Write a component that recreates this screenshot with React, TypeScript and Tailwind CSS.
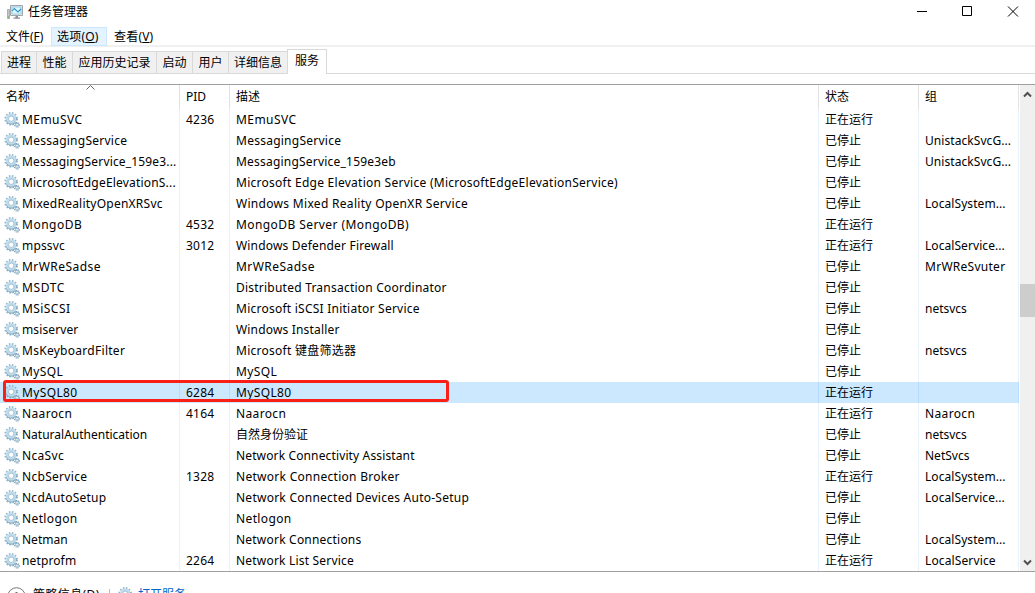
import React from 'react';

type Service = [name: string, pid: string, description: string, running: boolean, group: string];

const services: Service[] = [
  ['MEmuSVC', '4236', 'MEmuSVC', true, ''],
  ['MessagingService', '', 'MessagingService', false, 'UnistackSvcG...'],
  ['MessagingService_159e3...', '', 'MessagingService_159e3eb', false, 'UnistackSvcG...'],
  ['MicrosoftEdgeElevationS...', '', 'Microsoft Edge Elevation Service (MicrosoftEdgeElevationService)', false, ''],
  ['MixedRealityOpenXRSvc', '', 'Windows Mixed Reality OpenXR Service', false, 'LocalSystem...'],
  ['MongoDB', '4532', 'MongoDB Server (MongoDB)', true, ''],
  ['mpssvc', '3012', 'Windows Defender Firewall', true, 'LocalService...'],
  ['MrWReSadse', '', 'MrWReSadse', false, 'MrWReSvuter'],
  ['MSDTC', '', 'Distributed Transaction Coordinator', false, ''],
  ['MSiSCSI', '', 'Microsoft iSCSI Initiator Service', false, 'netsvcs'],
  ['msiserver', '', 'Windows Installer', false, ''],
  ['MsKeyboardFilter', '', 'Microsoft 键盘筛选器', false, 'netsvcs'],
  ['MySQL', '', 'MySQL', false, ''],
  ['MySQL80', '6284', 'MySQL80', true, ''],
  ['Naarocn', '4164', 'Naarocn', true, 'Naarocn'],
  ['NaturalAuthentication', '', '自然身份验证', false, 'netsvcs'],
  ['NcaSvc', '', 'Network Connectivity Assistant', false, 'NetSvcs'],
  ['NcbService', '1328', 'Network Connection Broker', true, 'LocalSystem...'],
  ['NcdAutoSetup', '', 'Network Connected Devices Auto-Setup', false, 'LocalService...'],
  ['Netlogon', '', 'Netlogon', false, ''],
  ['Netman', '', 'Network Connections', false, 'LocalSystem...'],
  ['netprofm', '2264', 'Network List Service', true, 'LocalService'],
];

// Extra advance, in pixels, spread over the characters of a label.
const extraWidth: Record<string, number> = {
  MEmuSVC: 3,
  MessagingService: 4,
  'MessagingService_159e3...': 4,
  MessagingService_159e3eb: 5,
  'MicrosoftEdgeElevationS...': 5,
  'Microsoft Edge Elevation Service (MicrosoftEdgeElevationService)': 17,
  MixedRealityOpenXRSvc: 5,
  'Windows Mixed Reality OpenXR Service': 11,
  MongoDB: 3.5,
  'MongoDB Server (MongoDB)': 10,
  mpssvc: 1,
  'Windows Defender Firewall': 4.5,
  MrWReSadse: 4.5,
  MrWReSvuter: 3,
  MSDTC: 3,
  'Distributed Transaction Coordinator': 8,
  MSiSCSI: 3,
  'Microsoft iSCSI Initiator Service': 8,
  msiserver: 1,
  'Windows Installer': 3,
  MsKeyboardFilter: 4.5,
  'Microsoft 键盘筛选器': 4,
  MySQL: 2,
  MySQL80: 2.5,
  Naarocn: 2.5,
  NcaSvc: 2,
  'Network Connectivity Assistant': 4,
  NcbService: 3,
  'Network Connection Broker': 7,
  NcdAutoSetup: 3,
  'Network Connected Devices Auto-Setup': 9,
  Netlogon: 3,
  'Network Connections': 4,
  netprofm: 1,
  'Network List Service': 4,
  'UnistackSvcG...': 1,
  'LocalSystem...': 1,
  'LocalService...': 1,
  LocalService: 1.5,
  '4236': 1,
  '4532': 1,
  '3012': 1,
  '6284': 1,
  '4164': 1,
  '1328': 1,
  '2264': 1,
};

const selectedName = 'MySQL80';

const tabs = [
  { label: '进程', width: 'w-[35px]' },
  { label: '性能', width: 'w-9' },
  { label: '应用历史记录', width: 'w-[84px]' },
  { label: '启动', width: 'w-9' },
  { label: '用户', width: 'w-9' },
  { label: '详细信息', width: 'w-[58px]' },
];

const columns = 'grid grid-cols-[180px_50px_589px_100px_100px]';

function Label({ text }: { text: string }) {
  return <span style={{ letterSpacing: (extraWidth[text] ?? 0) / text.length }}>{text}</span>;
}

function GearIcon() {
  return (
    <svg className="size-4 shrink-0" viewBox="0 0 16 16" fill="none">
      <circle cx="7.200" cy="6.800" r="6" stroke="#8fb3c8" strokeWidth="1.6" strokeDasharray="1.6 1.542" />
      <circle cx="7.200" cy="6.800" r="4.100" stroke="#bcdcee" strokeWidth="2.500" />
      <path d="M2.200 8.500a5.300 5.300 0 0 0 8.800 2.100M12.300 5.300a5.300 5.300 0 0 1 0 3" stroke="#7ba0b7" strokeWidth="0.900" />
      <circle cx="7.200" cy="6.800" r="2.700" fill="#fff" stroke="#86abc1" strokeWidth="0.700" />
      <circle cx="13" cy="12.800" r="2.300" stroke="#7599b0" strokeWidth="1.200" strokeDasharray="1 0.806" />
      <circle cx="13" cy="12.800" r="1.400" fill="#f4fafd" stroke="#94b7cb" />
    </svg>
  );
}

function AppIcon() {
  return (
    <svg className="h-[15px] w-[17px]" viewBox="0 0 17 15" fill="none">
      <path d="M0.500 4.500h2v9h-2z" fill="#c4c6c8" stroke="#96999b" strokeWidth="0.700" />
      <path d="M1 12h1" stroke="#38a838" />
      <path d="M3.500 0.500h12v10h-12z" fill="#e4e6e7" stroke="#a3a6a8" />
      <path d="M5 2h9v7H5z" fill="#e2f5fc" stroke="#7bc3df" strokeWidth="0.700" />
      <path d="M5 6l2.300-2.500L11 7l3-3" stroke="#2295c6" strokeWidth="1.100" />
      <path d="M8.500 11h2.500v1.500h2v1.200H6.500v-1.200h2z" fill="#8d9092" />
    </svg>
  );
}

function Column({ children, selected = false, header = false }: { children?: React.ReactNode; selected?: boolean; header?: boolean }) {
  const border = header ? 'border-[#e2e2e2]' : selected ? 'border-[#b5dcff]' : 'border-[#e8f2fd]';
  return <div className={`flex min-w-0 items-center overflow-hidden border-r pl-1.5 whitespace-nowrap ${border}`}>{children}</div>;
}

function ServiceRow({ service }: { service: Service }) {
  const [name, pid, description, running, group] = service;
  const selected = name === selectedName;
  return (
    <div className={`${columns} h-[21px] ${selected ? 'bg-[#cce8ff]' : ''}`}>
      <div className={`flex min-w-0 items-center gap-0.5 overflow-hidden border-r pl-1 whitespace-nowrap ${selected ? 'border-[#b5dcff]' : 'border-[#e8f2fd]'}`}>
        <GearIcon />
        <Label text={name} />
      </div>
      <Column selected={selected}><Label text={pid} /></Column>
      <Column selected={selected}><Label text={description} /></Column>
      <Column selected={selected}>{running ? '正在运行' : '已停止'}</Column>
      <Column selected={selected}><Label text={group} /></Column>
    </div>
  );
}

export default function App() {
  return (
    <div className="flex h-[593px] w-[1035px] flex-col overflow-hidden bg-white font-['Noto_Sans','Noto_Sans_CJK_SC',sans-serif] text-[12px] leading-[20px] text-black">
      <header className="flex h-[25px] shrink-0 items-start justify-between">
        <div className="flex items-center gap-1 pt-0.5 pl-[7px]">
          <AppIcon />
          <span>任务管理器</span>
        </div>
        <div className="flex pt-1.5 pr-4">
          <svg className="h-[11px] w-[102px]" viewBox="0 0 102 11" fill="none" stroke="#000">
            <path d="M0 5.500h10M45.500 0.500h9v9h-9z" />
            <path d="M91 0.500l10 10M101 0.500l-10 10" />
          </svg>
        </div>
      </header>

      <nav className="flex h-[22px] shrink-0 items-start border-b-2 border-[#f0f0f0] pl-1.5">
        <span className="w-[45px] pt-0.5">文件(<u>F</u>)</span>
        <span className="mt-0.5 flex h-[19px] w-14 items-center border border-[#cce8ff] bg-[#e5f3ff] pl-[5px] tracking-[0.2px]">选项(<u>O</u>)</span>
        <span className="pt-0.5 pl-[7px] tracking-[0.2px]">查看(<u>V</u>)</span>
      </nav>

      <div className="flex h-[27px] shrink-0 items-end">
        <div className="h-px w-px bg-[#d9d9d9]" />
        <div className="flex h-[23px] border-y border-l border-[#d9d9d9] bg-[#f0f0f0]">
          {tabs.map((tab, index) => (
            <div key={tab.label} className={`flex items-center justify-center ${tab.width} ${index < tabs.length - 1 ? 'border-r border-[#d9d9d9]' : ''}`}>
              {tab.label}
            </div>
          ))}
        </div>
        <div className="flex h-[25px] w-10 items-center justify-center border-x border-t border-[#d9d9d9] pb-0.5">服务</div>
        <div className="h-px grow bg-[#d9d9d9]" />
      </div>

      <main className="relative mt-2.5 flex h-[488px] shrink-0 border-y border-[#a0a0a0]">
        <div className="w-[1019px]">
          <div className={`${columns} h-6`}>
            <Column header>名称</Column>
            <Column header>PID</Column>
            <Column header>描述</Column>
            <Column header>状态</Column>
            <Column header>组</Column>
          </div>
          {services.map((service) => <ServiceRow key={service[0]} service={service} />)}
        </div>
        <svg className="absolute top-0 left-[86px] h-[5px] w-[9px]" viewBox="0 0 9 5" fill="none" stroke="#666">
          <path d="M0.500 4.500l4-4 4 4" />
        </svg>
        <div className="ml-px flex w-[15px] flex-col items-center bg-[#f0f0f0]">
          <svg className="mt-1.5 h-[7px] w-[9px] shrink-0" viewBox="0 0 9 7" fill="none" stroke="#505050" strokeWidth="2">
            <path d="M1 5.500L4.500 2 8 5.500" />
          </svg>
          <div className="mt-[186px] h-[33px] w-full bg-[#cdcdcd]" />
          <svg className="mt-auto mb-[5px] h-[7px] w-[9px] shrink-0" viewBox="0 0 9 7" fill="none" stroke="#505050" strokeWidth="2">
            <path d="M1 1.500L4.500 5 8 1.500" />
          </svg>
        </div>
        <div className="absolute top-[295px] left-[3px] h-[22px] w-[446px] rounded-[3px] border-[3px] border-[#fb2016]" />
      </main>

      <footer className="flex h-[21px] shrink-0 items-start overflow-hidden pt-[13px] pl-[7px]">
        <svg className="mt-0.5 h-5 w-5 shrink-0" viewBox="0 0 20 20" fill="none" stroke="#777">
          <circle cx="9.500" cy="9.500" r="8.800" />
          <path d="M6 9l3.500-4 3.500 4" stroke="#555" />
        </svg>
        <span className="ml-1.5 w-[68px] tracking-[0.4px] whitespace-nowrap">策略信息(<u>D</u>)</span>
        <div className="mt-1 ml-2 h-5 w-px bg-[#c0c0c0]" />
        <div className="mt-0.5 ml-2"><GearIcon /></div>
        <span className="ml-1 whitespace-nowrap text-[#0066cc]">打开服务</span>
      </footer>
    </div>
  );
}
